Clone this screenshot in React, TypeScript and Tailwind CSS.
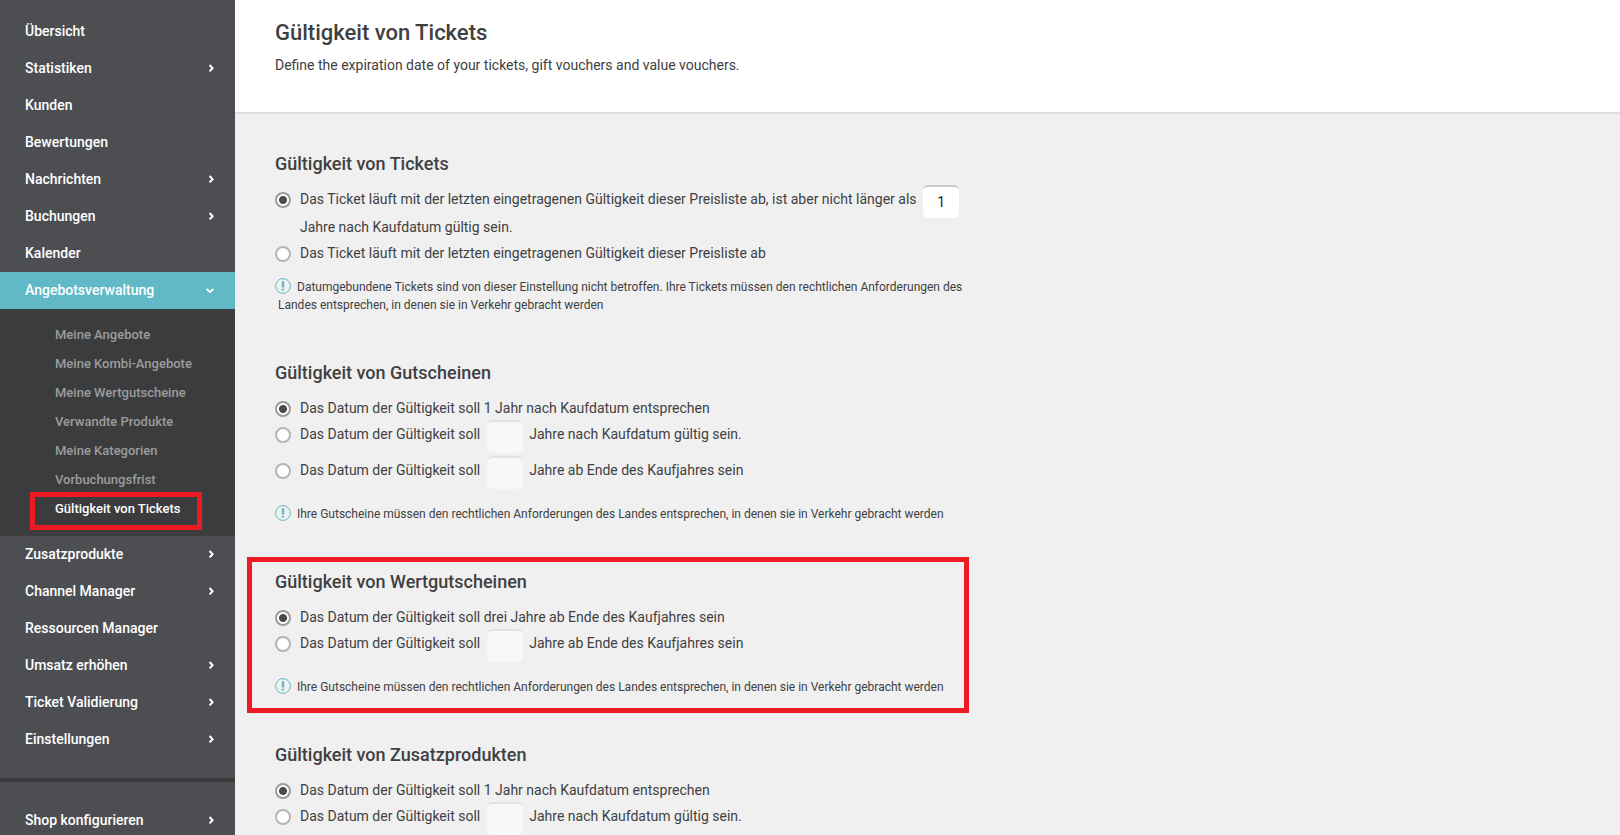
import { useState } from 'react'
import type { ReactNode } from 'react'
import { clsx } from 'clsx'

interface MenuEntry {
  label: string
  expandable?: boolean
  children?: string[]
}

const MAIN_MENU: MenuEntry[] = [
  { label: 'Übersicht' },
  { label: 'Statistiken', expandable: true },
  { label: 'Kunden' },
  { label: 'Bewertungen' },
  { label: 'Nachrichten', expandable: true },
  { label: 'Buchungen', expandable: true },
  { label: 'Kalender' },
  {
    label: 'Angebotsverwaltung',
    expandable: true,
    children: [
      'Meine Angebote',
      'Meine Kombi-Angebote',
      'Meine Wertgutscheine',
      'Verwandte Produkte',
      'Meine Kategorien',
      'Vorbuchungsfrist',
      'Gültigkeit von Tickets',
    ],
  },
  { label: 'Zusatzprodukte', expandable: true },
  { label: 'Channel Manager', expandable: true },
  { label: 'Ressourcen Manager' },
  { label: 'Umsatz erhöhen', expandable: true },
  { label: 'Ticket Validierung', expandable: true },
  { label: 'Einstellungen', expandable: true },
]

const ACTIVE_PAGE = 'Gültigkeit von Tickets'
const VOUCHER_NOTE =
  'Ihre Gutscheine müssen den rechtlichen Anforderungen des Landes entsprechen, in denen sie in Verkehr gebracht werden'

export default function App() {
  return (
    <div className="flex h-screen overflow-hidden bg-[#f0f0f0] font-[Roboto,sans-serif] text-sm text-[#3f4042]">
      <Sidebar />
      <main className="min-w-0 flex-1">
        <header className="border-b-2 border-[#dedede] bg-white px-10 pt-[19px] pb-9">
          <h1 className="text-[22px] leading-7 font-medium">Gültigkeit von Tickets</h1>
          <p className="mt-[7px] leading-[22px]">
            Define the expiration date of your tickets, gift vouchers and value vouchers.
          </p>
        </header>

        <form className="flex max-w-[780px] flex-col gap-[47px] px-10 pt-[38px]">
          <Section
            title="Gültigkeit von Tickets"
            note="Datumgebundene Tickets sind von dieser Einstellung nicht betroffen. Ihre Tickets müssen den rechtlichen Anforderungen des Landes entsprechen, in denen sie in Verkehr gebracht werden"
          >
            <Option
              name="tickets"
              before="Das Ticket läuft mit der letzten eingetragenen Gültigkeit dieser Preisliste ab, ist aber nicht länger als"
              after="Jahre nach Kaufdatum gültig sein."
              years="1"
              checked
            />
            <Option
              name="tickets"
              before="Das Ticket läuft mit der letzten eingetragenen Gültigkeit dieser Preisliste ab"
            />
          </Section>

          <Section title="Gültigkeit von Gutscheinen" note={VOUCHER_NOTE}>
            <Option
              name="vouchers"
              before="Das Datum der Gültigkeit soll 1 Jahr nach Kaufdatum entsprechen"
              checked
            />
            <Option
              name="vouchers"
              before="Das Datum der Gültigkeit soll"
              after="Jahre nach Kaufdatum gültig sein."
            />
            <Option
              name="vouchers"
              before="Das Datum der Gültigkeit soll"
              after="Jahre ab Ende des Kaufjahres sein"
            />
          </Section>

          <Section title="Gültigkeit von Wertgutscheinen" note={VOUCHER_NOTE} highlighted>
            <Option
              name="value-vouchers"
              before="Das Datum der Gültigkeit soll drei Jahre ab Ende des Kaufjahres sein"
              checked
            />
            <Option
              name="value-vouchers"
              before="Das Datum der Gültigkeit soll"
              after="Jahre ab Ende des Kaufjahres sein"
            />
          </Section>

          <Section title="Gültigkeit von Zusatzprodukten">
            <Option
              name="extras"
              before="Das Datum der Gültigkeit soll 1 Jahr nach Kaufdatum entsprechen"
              checked
            />
            <Option
              name="extras"
              before="Das Datum der Gültigkeit soll"
              after="Jahre nach Kaufdatum gültig sein."
            />
          </Section>
        </form>
      </main>
    </div>
  )
}

function Sidebar() {
  return (
    <nav className="w-[235px] shrink-0 bg-[#4d4e52] pt-[13px] font-medium text-white">
      <ul className="pb-5">
        {MAIN_MENU.map((entry) => (
          <MenuItem key={entry.label} entry={entry} />
        ))}
      </ul>
      <ul className="border-t-4 border-[#3b3c3e] pt-5">
        <MenuItem entry={{ label: 'Shop konfigurieren', expandable: true }} />
      </ul>
    </nav>
  )
}

function MenuItem({ entry }: { entry: MenuEntry }) {
  const open = Boolean(entry.children)

  return (
    <li>
      <a
        href="#"
        className={clsx(
          'flex h-[37px] items-center justify-between pr-5 pb-0.5 pl-[25px]',
          open && 'bg-[#61b8c6]'
        )}
      >
        {entry.label}
        {entry.expandable && <Chevron down={open} />}
      </a>
      {entry.children && (
        <ul className="bg-[#3b3c3e] py-3 text-[13px]">
          {entry.children.map((child) => (
            <li key={child} className="relative">
              <a
                href="#"
                className={clsx(
                  'flex h-[29px] items-center pl-[55px]',
                  child === ACTIVE_PAGE ? 'text-white' : 'text-[#9c9c9d]'
                )}
              >
                {child}
              </a>
              {child === ACTIVE_PAGE && (
                <div className="pointer-events-none absolute -top-[3px] left-[30px] h-[38px] w-[172px] border-5 border-[#ed1c24]" />
              )}
            </li>
          ))}
        </ul>
      )}
    </li>
  )
}

function Chevron({ down }: { down: boolean }) {
  return (
    <svg
      width="10"
      height="10"
      viewBox="0 0 10 10"
      fill="none"
      stroke="currentColor"
      strokeWidth="2"
      aria-hidden="true"
    >
      <path d={down ? 'M1.6 4 L5 7 L8.4 4' : 'M4.6 2 L7.6 5.2 L4.6 8.4'} />
    </svg>
  )
}

interface SectionProps {
  title: string
  note?: string
  highlighted?: boolean
  children: ReactNode
}

function Section({ title, note, highlighted, children }: SectionProps) {
  return (
    <section className="relative">
      <h2 className="mb-[11px] text-lg leading-6 font-medium">{title}</h2>
      {children}
      {note && (
        <p className="mt-[11px] pl-[3px] text-xs leading-[18px]">
          <InfoIcon />
          {note}
        </p>
      )}
      {highlighted && (
        <div className="pointer-events-none absolute -top-[13px] right-1.5 -bottom-[17px] -left-7 border-5 border-[#ed1c24]" />
      )}
    </section>
  )
}

interface OptionProps {
  name: string
  before: string
  after?: string
  years?: string
  checked?: boolean
}

function Option({ name, before, after, years = '', checked = false }: OptionProps) {
  const [value, setValue] = useState(years)

  return (
    <label className={clsx('flex items-start gap-[9px] pb-0.5', after && 'min-h-9')}>
      <input
        type="radio"
        name={name}
        defaultChecked={checked}
        className="mt-[5px] size-4 shrink-0 appearance-none rounded-full border-2 border-[#b4b4b4] bg-white checked:border-[#9d9d9d] checked:bg-[radial-gradient(circle,#4a4b4f_3.6px,#fff_4.4px)]"
      />
      <span className="leading-6">
        {before}
        {after && (
          <>
            {' '}
            <input
              type="text"
              aria-label="Jahre"
              value={value}
              disabled={!checked}
              onChange={(e) => setValue(e.target.value)}
              className="mx-[3px] -mt-0.5 -mb-[3px] h-[33px] w-9 rounded-[5px] border-t-2 border-[#cccccc] bg-white pb-0.5 text-center align-top text-[#222222] disabled:border-[#e2e2e2] disabled:bg-[#f7f7f7]"
            />{' '}
            {after}
          </>
        )}
      </span>
    </label>
  )
}

function InfoIcon() {
  return (
    <svg
      width="16"
      height="16"
      viewBox="0 0 16 16"
      className="mr-1.5 -ml-[3px] inline-block align-[-3px]"
      aria-hidden="true"
    >
      <circle cx="8" cy="8" r="7.4" fill="none" stroke="#61b8c6" strokeWidth="1" />
      <path d="M6.8 3.2 H9.2 V9.4 H6.8 Z M6.8 10.8 H9.2 V12.4 H6.8 Z" fill="#61b8c6" />
    </svg>
  )
}
